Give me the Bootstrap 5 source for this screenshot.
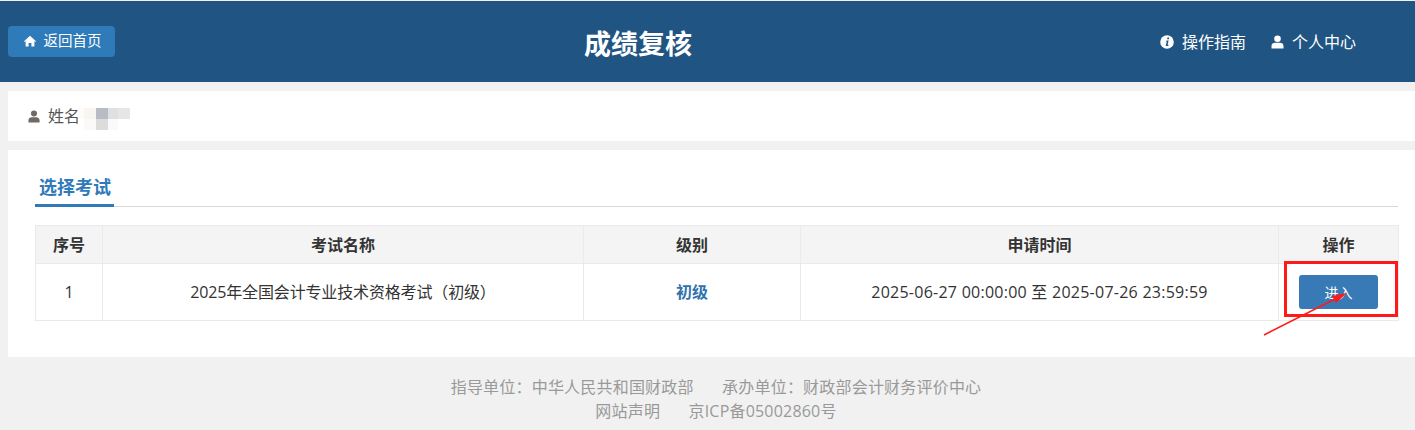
<!DOCTYPE html>
<html lang="zh-CN">
<head>
<meta charset="utf-8">
<title>成绩复核</title>
<link href="https://cdn.jsdelivr.net/npm/bootstrap@5.3.0/dist/css/bootstrap.min.css" rel="stylesheet">
<style>
html,body{height:430px;overflow:hidden}
body{background:#f1f1f1;font-family:"Open Sans","Noto Sans CJK SC",sans-serif;color:#333;padding-top:1px;position:relative}
.top-bar{background:#205583;height:81px;padding:0 59px 0 8px}
.back-btn{background:#2f7ab9;color:#fff;font-size:14.500px;height:31px;width:107px;border-radius:4px;margin-top:-1px;padding-left:2px!important}
.back-btn:hover{background:#2f7ab9;color:#fff}
.page-title{font-size:27px;font-weight:700;color:#fff;position:absolute;left:0;width:1276px;text-align:center;top:24px;line-height:40px;margin:0}
.top-link{color:#fff;font-size:16px;text-decoration:none}
.top-links{gap:25px}
.user-strip{background:#fff;height:50px;margin:9px 0 0 8px;padding-left:20px;font-size:16px;color:#555}
.mosaic{display:grid;grid-template-columns:6px 12px 12px 10px 12px;grid-auto-rows:11px;margin:6px 0 0 -2px}
.mosaic span:nth-child(1){background:#fdfcfb}.mosaic span:nth-child(2){background:#f9f6f2}.mosaic span:nth-child(3){background:#b9bcc4}.mosaic span:nth-child(4){background:#dfe0e1}.mosaic span:nth-child(5){background:#e6e6e6}
.mosaic span:nth-child(6){background:#fff}.mosaic span:nth-child(7){background:#fbfaf8}.mosaic span:nth-child(8){background:#dcdcdd}.mosaic span:nth-child(9){background:#f8fafc}.mosaic span:nth-child(10){background:#fff}
.exam-panel{background:#fff;height:207px;margin:9px 0 0 8px;padding:22px 17px 0 27px}
.tab-line{border-bottom:1px solid #d8d8d8;height:35px;margin-bottom:18px}
.tab-active{display:inline-block;color:#2f7ab9;font-size:18px;font-weight:700;height:35px;line-height:30px;padding:0 4px;border-bottom:3px solid #2f7ab9;width:79px;white-space:nowrap}
.exam-table{table-layout:fixed;width:1363px;border-collapse:collapse;font-size:16px;margin:0}
.exam-table th,.exam-table td{border:1px solid #e9e9ee;text-align:center;vertical-align:middle;padding:0;color:#333}
.exam-table th{background:#f4f4f4;height:38px;font-weight:700;font-size:16px}
.exam-table td{height:57px;background:#fff}
.exam-name{letter-spacing:-.15px}
.exam-date{letter-spacing:.25px}
.level-text{color:#2f72ad;font-weight:700;font-size:16px}
.enter-btn{background:#387ab5;color:#fff;width:79px;height:34px;font-size:14px;border-radius:3px;border:0;padding:0}
.enter-btn:hover{background:#387ab5;color:#fff}
.foot-text{text-align:center;color:#999;font-size:16px;line-height:24px;padding-top:18px;padding-left:17px;letter-spacing:.2px}
.mark-box{position:absolute;left:1284px;top:261px;width:114px;height:56px;border:3px solid #ff1a1a;pointer-events:none}
.mark-arrow{position:absolute;left:1255px;top:285px;pointer-events:none}
</style>
</head>
<body>
<header class="top-bar d-flex align-items-center justify-content-between">
  <a href="#" class="btn back-btn d-inline-flex align-items-center justify-content-center gap-2 p-0">
    <svg width="12" height="12" viewBox="0 0 12 12" fill="#fff"><path d="M6 .8 0 6.200l.6.7L1.600 6v5.400h3V8h2.800v3.400h3V6l1 .9.6-.7z"/></svg>返回首页
  </a>
  <h1 class="page-title">成绩复核</h1>
  <nav class="d-flex align-items-center top-links">
    <a href="#" class="top-link d-flex align-items-center gap-2">
      <svg width="14" height="14" viewBox="0 0 14 14"><circle cx="7" cy="7" r="6.800" fill="#fff"/><path d="M7.400 2.600h1.800l-.3 1.600H7.100zM6.600 5.500h2l-1 4.200h1l-.3 1.200H5.700l1-4.200h-.6z" fill="#205583"/></svg>操作指南
    </a>
    <a href="#" class="top-link d-flex align-items-center gap-2">
      <svg width="13" height="14" viewBox="0 0 13 14" fill="#fff"><circle cx="6.500" cy="3.700" r="3.300"/><path d="M.5 13.500V11c0-2 1.700-3.200 3.500-3.200h5c1.800 0 3.500 1.200 3.500 3.200v2.500z"/></svg>个人中心
    </a>
  </nav>
</header>
<section class="user-strip d-flex align-items-center">
  <svg class="me-2" width="12" height="13" viewBox="0 0 13 14" fill="#6f6a66"><circle cx="6.500" cy="3.700" r="3.300"/><path d="M.5 13.500V11c0-2 1.700-3.200 3.500-3.200h5c1.800 0 3.500 1.200 3.500 3.200v2.500z"/></svg>
  <span>姓名</span>
  <div class="mosaic"><span></span><span></span><span></span><span></span><span></span><span></span><span></span><span></span><span></span><span></span></div>
</section>
<main class="exam-panel">
  <div class="tab-line"><span class="tab-active">选择考试</span></div>
  <table class="table exam-table">
    <colgroup><col style="width:67px"><col style="width:481px"><col style="width:217px"><col style="width:478px"><col style="width:120px"></colgroup>
    <thead><tr><th>序号</th><th>考试名称</th><th>级别</th><th>申请时间</th><th>操作</th></tr></thead>
    <tbody><tr>
      <td>1</td>
      <td><span class="exam-name">2025年全国会计专业技术资格考试（初级）</span></td>
      <td><span class="level-text">初级</span></td>
      <td><span class="exam-date">2025-06-27 00:00:00 至 2025-07-26 23:59:59</span></td>
      <td><button type="button" class="btn enter-btn">进入</button></td>
    </tr></tbody>
  </table>
</main>
<footer class="foot-text">
  <div><span class="me-4">指导单位：中华人民共和国财政部</span> <span>承办单位：财政部会计财务评价中心</span></div>
  <div><span class="me-4">网站声明</span> <span>京ICP备05002860号</span></div>
</footer>
<div class="mark-box"></div>
<svg class="mark-arrow" width="100" height="55" viewBox="0 0 100 55"><path d="M9 50 79 14.500" stroke="#ff1a1a" stroke-width="1.500" fill="none"/><path d="M92 8 77 11 81 18z" fill="#ff1a1a"/></svg>
</body>
</html>
